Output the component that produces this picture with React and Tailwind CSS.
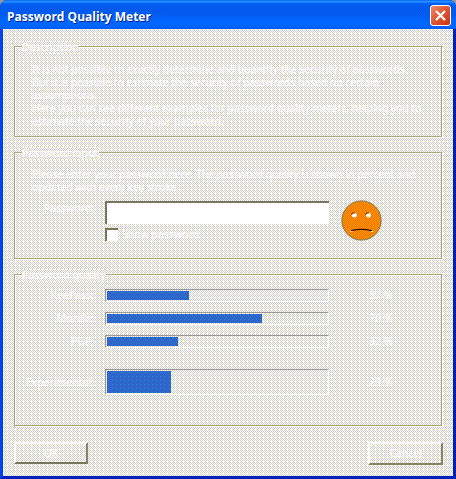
import React from "react";

const dither =
  "[background:conic-gradient(at_1px_1px,transparent_75%,#ffffcc_0)_0_0/4px_4px,repeating-conic-gradient(#ffffff_0_25%,#cfccc8_0_50%)_0_0/2px_2px]";
const blueDots =
  "[background:conic-gradient(at_1px_1px,transparent_75%,#2288cc_0)_1px_1px/4px_4px,#2f66cc]";

function Group({ title, titleWidth, className, children }) {
  return (
    <fieldset
      className={`relative w-[428px] shrink-0 border border-[#a8a87c] shadow-[1px_1px_0_#fff,inset_1px_1px_0_#fff] ${className}`}
    >
      <div className={`absolute -top-[6px] left-[7px] h-[13px] ${titleWidth} ${dither}`}>
        <span className="block whitespace-nowrap leading-[13px]">{title}</span>
      </div>
      {children}
    </fieldset>
  );
}

function Meter({ label, value, height, fill }) {
  return (
    <div className={`flex items-center ${height}`}>
      <span className="w-[79px] text-right whitespace-nowrap leading-[13px]">{label}</span>
      <div className="ml-[11px] h-full w-[224px] border border-t-[#999999] border-l-[#999999] border-r-white border-b-white p-px">
        <div className={`h-full ${fill} ${blueDots}`} />
      </div>
      <span className="ml-[40px] leading-[13px]">{value}</span>
    </div>
  );
}

function Face() {
  return (
    <svg className="-mt-px ml-[12px] h-[41px] w-[41px]" viewBox="0 0 41 41">
      <defs>
        <pattern id="orange" width="2" height="2" patternUnits="userSpaceOnUse">
          <rect width="2" height="2" fill="#ff9500" />
          <rect width="1" height="1" fill="#f07400" />
          <rect x="1" y="1" width="1" height="1" fill="#f07400" />
        </pattern>
      </defs>
      <circle cx="20.5" cy="20.5" r="19.6" fill="url(#orange)" stroke="#777755" />
      <circle cx="13.3" cy="15.2" r="2.4" fill="#fff" />
      <circle cx="27.5" cy="15.2" r="2.4" fill="#fff" />
      <path d="M11 14.5V13h3M25 14.5V13h3" fill="none" stroke="#663300" />
      <path d="M9.5 31.5h2M30 31.5h2" stroke="#fff" />
      <path d="M10 30.7Q20.5 28.2 31 30.7" fill="none" stroke="#331100" strokeWidth="1.3" />
    </svg>
  );
}

export default function App() {
  return (
    <div className="flex h-[479px] w-[456px] flex-col overflow-hidden bg-[#999999] font-['Noto_Sans',sans-serif] text-[10.5px] leading-[13px] text-white">
      <div className="flex h-full flex-col rounded-t-[7px] border-r-[3px] border-b-[3px] border-l-[3px] border-l-[#0044ee] border-r-[#0022bb] border-b-[#0022bb] bg-[#0055ee]">
        <header className="-mx-[3px] flex h-[29px] shrink-0 items-center justify-between rounded-t-[7px] pr-[5px] pl-[7px] [background:linear-gradient(#0066ff,#3399ff_2px,#0066ff_3px,transparent_5px,transparent_14px,#0066ff_20px,#0066ff_27px,#0055ee),repeating-conic-gradient(#0066ff_0_25%,#0050dd_0_50%)_0_0/2px_2px]">
          <h1 className="mt-[3px] whitespace-nowrap font-['Open_Sans',sans-serif] text-[12px] font-bold [text-shadow:1px_1px_0_#002288]">
            Password Quality Meter
          </h1>
          <button className="mt-[2px] flex h-[21px] w-[21px] items-center justify-center rounded-[3px] border border-white bg-linear-to-br from-[#ee8866] via-[#dd5533] to-[#cc3300]">
            <svg className="h-[11px] w-[11px]" viewBox="0 0 11 11">
              <path d="M1 1 10 10M10 1 1 10" stroke="#fff" strokeWidth="2.2" />
            </svg>
          </button>
        </header>

        <main className={`flex grow flex-col pt-[17px] pl-[11px] ${dither}`}>
          <Group title="Description" titleWidth="w-[56px]" className="h-[91px]">
            <div className="pt-[16px] pl-[17px] whitespace-nowrap">
              <p className="tracking-[-0.07px]">It is not possible to exactly determine and quantify the security of passwords.</p>
              <p className="tracking-[-0.07px]">But it is possible to estimate the security of passwords based on certain</p>
              <p className="tracking-[-0.07px]">assumptions.</p>
              <p className="tracking-[-0.1px]">Here you can see different examples for password quality meters, helping you to</p>
              <p className="tracking-[-0.07px]">estimate the security of your password.</p>
            </div>
          </Group>

          <Group title="Password input" titleWidth="w-[77px]" className="mt-[15px] h-[107px]">
            <div className="pt-[15px] pl-[17px] whitespace-nowrap tracking-[-0.11px]">
              <p>Please enter your password here. The password quality is shown in percent and</p>
              <p>updated with every key stroke.</p>
            </div>
            <div className="mt-[7px] flex items-start">
              <span className="mt-px w-[79px] text-right">Password:</span>
              <div className="ml-[11px]">
                <div className="h-[23px] w-[224px] border-t-2 border-l-2 border-[#77775f] bg-white" />
                <div className="mt-[4px] flex items-center">
                  <span className="h-[13px] w-[13px] border-t-2 border-l-2 border-[#77775f] bg-white" />
                  <span className="ml-[4px]">Show password</span>
                </div>
              </div>
              <Face />
            </div>
          </Group>

          <Group title="Password quality" titleWidth="w-[84px]" className="mt-[15px] h-[152px]">
            <div className="flex flex-col pt-[14px]">
              <Meter label="KeePass:" value="37 %" height="h-[13px] mb-[10px]" fill="w-[82px]" />
              <Meter label="Mozilla:" value="70 %" height="h-[13px] mb-[10px]" fill="w-[155px]" />
              <Meter label="PGP:" value="32 %" height="h-[13px] mb-[21px]" fill="w-[71px]" />
              <Meter label="Experimental:" value="29 %" height="h-[26px]" fill="w-[64px]" />
            </div>
          </Group>

          <div className="mt-[16px] flex w-[429px] justify-between">
            <button className="h-[22px] w-[74px] border-2 border-t-white border-l-white border-r-[#858566] border-b-[#77775f]">
              OK
            </button>
            <button className="h-[23px] w-[75px] border-2 border-t-white border-l-white border-r-[#858566] border-b-[#858566]">
              Cancel
            </button>
          </div>
        </main>
      </div>
    </div>
  );
}
